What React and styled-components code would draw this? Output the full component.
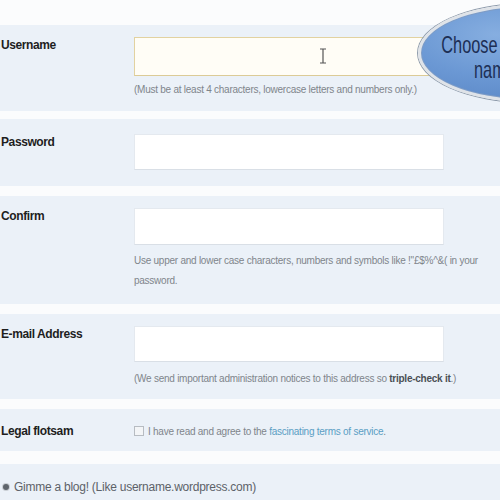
import React from 'react';
import styled, {createGlobalStyle} from 'styled-components';

const Global = createGlobalStyle`
  html, body {
    margin: 0;
    padding: 0;
    background: #fbfcfd;
    font-family: "Liberation Sans", Arial, sans-serif;
    overflow: hidden;
  }
`

const Page = styled.div`
  position: relative;
  width: 500px;
  height: 500px;
  padding-top: 25px;
  box-sizing: border-box;
  overflow: hidden;
`

const Row = styled.div`
  display: flex;
  background: #ebf1f8;
  padding: ${props => props.pad || '12px 0 14px'};
  margin-bottom: ${props => props.gap || '8px'};
`

const Label = styled.div`
  width: 133px;
  flex-shrink: 0;
  padding: ${props => props.top || '1px'} 0 0 1px;
  font-size: 12px;
  font-weight: bold;
  color: #1e1e1e;
  letter-spacing: -0.4px;
`

const Field = styled.div`
  display: flex;
  flex-direction: column;
`

const Input = styled.div`
  position: relative;
  width: 310px;
  height: ${props => props.h || 36}px;
  box-sizing: border-box;
  background: ${props => props.active ? '#fffdf6' : '#ffffff'};
  border: 1px solid ${props => props.active ? '#e2d2a0' : '#e4e9ef'};
  border-bottom-color: ${props => props.active ? '#dccb96' : '#d9dfe6'};
`

const Cursor = styled.svg`
  position: absolute;
  left: 184px;
  top: 10px;
`

const Hint = styled.div`
  margin-top: ${props => props.mt || '8px'};
  font-size: 10px;
  line-height: ${props => props.lh || '14px'};
  color: #80858b;
  letter-spacing: -0.25px;
  width: ${props => props.w || 'auto'};
  white-space: ${props => props.w ? 'normal' : 'nowrap'};
`

const Strong = styled.b`
  color: #4a4f55;
`

const Legal = styled.div`
  display: flex;
  align-items: center;
  gap: 4px;
  font-size: 10px;
  color: #80858b;
  letter-spacing: -0.25px;
  padding-top: 2px;
`

const Box = styled.span`
  width: 10px;
  height: 10px;
  border: 1px solid #b7bcc2;
  background: #f3f5f7;
  box-sizing: border-box;
`

const Link = styled.span`
  color: #5a9ec4;
`

const Blog = styled.div`
  display: flex;
  align-items: center;
  gap: 5px;
  padding-left: 3px;
  font-size: 12px;
  color: #5d6268;
  letter-spacing: -0.25px;
`

const Radio = styled.span`
  width: 6px;
  height: 6px;
  border-radius: 50%;
  background: #5f656c;
  box-shadow: 0 0 0 1px #c9ced4;
`

const Bubble = styled.div`
  position: absolute;
  left: 418px;
  top: 4px;
  width: 220px;
  height: 98px;
  box-sizing: border-box;
  border-radius: 50%;
  border: 3px solid #dfe3e8;
  box-shadow: 0 0 0 1px #8e9bab, inset 0 0 0 1px #7f9cc4;
  background: radial-gradient(ellipse at 35% 30%, #86aee0 0%, #6b98d4 45%, #527fbf 100%);
  padding: 25px 0 0 19px;
`

const BubbleText = styled.div`
  width: 160px;
  font-size: 24px;
  line-height: 25px;
  color: #1d2f55;
  text-align: center;
  transform: scaleX(0.68);
  transform-origin: left top;
`

export default function App() {
  return (
    <Page>
      <Global />
      <Row pad="12px 0 14px">
        <Label>Username</Label>
        <Field>
          <Input active h={39}>
            <Cursor width="8" height="16" viewBox="0 0 8 16">
              <path d="M1 1h6M4 1v14M1 15h6" stroke="#555" strokeWidth="1.2" fill="none" />
            </Cursor>
          </Input>
          <Hint mt="7px">(Must be at least 4 characters, lowercase letters and numbers only.)</Hint>
        </Field>
      </Row>
      <Row pad="15px 0 16px" gap="10px">
        <Label>Password</Label>
        <Field>
          <Input h={36} />
        </Field>
      </Row>
      <Row pad="12px 0 13px" gap="10px">
        <Label>Confirm</Label>
        <Field>
          <Input h={37} />
          <Hint mt="6px" lh="20px" w="350px">
            Use upper and lower case characters, numbers and symbols like !"£$%^&amp;( in your password.
          </Hint>
        </Field>
      </Row>
      <Row pad="12px 0 13px" gap="10px">
        <Label>E-mail Address</Label>
        <Field>
          <Input h={36} />
          <Hint mt="10px">
            (We send important administration notices to this address so <Strong>triple-check it</Strong>.)
          </Hint>
        </Field>
      </Row>
      <Row pad="13px 0 13px" gap="13px">
        <Label top="2px">Legal flotsam</Label>
        <Legal>
          <Box />
          <span>I have read and agree to the <Link>fascinating terms of service</Link>.</span>
        </Legal>
      </Row>
      <Row pad="16px 0 20px">
        <Blog>
          <Radio />
          <span>Gimme a blog! (Like username.wordpress.com)</span>
        </Blog>
      </Row>
      <Bubble>
        <BubbleText>Choose a user name</BubbleText>
      </Bubble>
    </Page>
  )
}
